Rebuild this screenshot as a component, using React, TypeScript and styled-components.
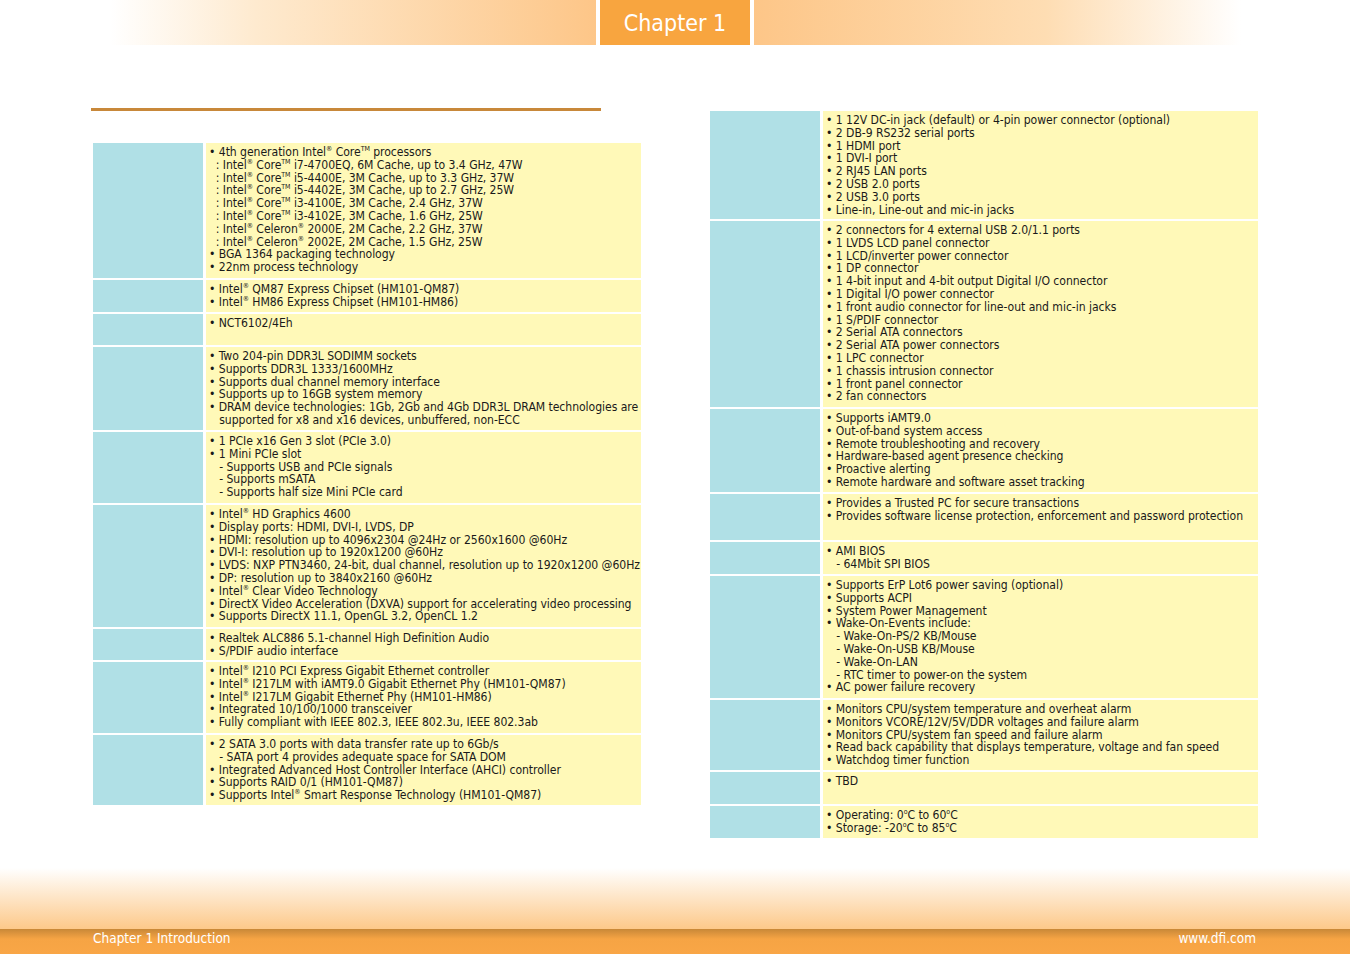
import React from "react";
import styled, { createGlobalStyle } from "styled-components";

const G = createGlobalStyle`
  html,body{margin:0;padding:0;background:#fff;}
  body{font-family:"DejaVu Sans Condensed","DejaVu Sans",sans-serif;}
`;
const Page = styled.div`width:1350px;height:954px;position:relative;overflow:hidden;display:flex;flex-direction:column;`;
const Header = styled.div`display:flex;height:45px;padding-left:110px;gap:4px;`;
const HBarL = styled.div`width:486px;background:linear-gradient(90deg,#fff 0%,#feeacf 30%,#fdc688 100%);`;
const HBarR = styled.div`width:487px;background:linear-gradient(90deg,#fdc688 0%,#feddb3 60%,#fff 100%);`;
const ChapBox = styled.div`width:150px;background:#f8a53f;color:#fff;font-size:23px;display:flex;align-items:center;justify-content:center;font-family:"DejaVu Sans Condensed",sans-serif;`;
const Body = styled.div`display:flex;flex:1;`;
const Col = styled.div<{ $pl: number; $pt: number }>`padding-left:${p => p.$pl}px;padding-top:${p => p.$pt}px;display:flex;flex-direction:column;`;
const Rule = styled.div`width:510px;height:3px;background:#c8883a;margin-bottom:32px;`;
const Table = styled.div`display:flex;flex-direction:column;gap:2px;padding-left:${(p: { $pl?: number }) => p.$pl || 0}px;`;
const Row = styled.div<{ $h: number }>`display:flex;gap:3px;height:${p => p.$h}px;`;
const Label = styled.div`width:110px;background:#b0e0e6;`;
const Content = styled.div`width:435px;background:#fff9b8;padding:3px 0 0 3px;box-sizing:border-box;font-size:12.1px;line-height:12.8px;color:#1a1a1a;white-space:pre;letter-spacing:-0.05px;`;
const Sup = styled.sup`font-size:7px;line-height:0;vertical-align:5px;`;
const Footer = styled.div`height:86px;display:flex;flex-direction:column;`;
const FGrad = styled.div`height:61px;background:linear-gradient(180deg,#fff 0%,#fdc98a 100%);`;
const FBar = styled.div`height:25px;background:linear-gradient(180deg,#c88838 0%,#f6a444 40%,#f9a646 100%);display:flex;justify-content:space-between;align-items:flex-start;padding:1px 94px 0 93px;box-sizing:border-box;color:#fff;font-size:13.5px;`;

const fmt = (s: string) => {
  const parts = s.split(/(®|™|°)/);
  return parts.map((p, i) =>
    p === "®" ? <Sup key={i}>®</Sup> : p === "™" ? <Sup key={i}>TM</Sup> : p === "°" ? <Sup key={i}>o</Sup> : p
  );
};

const left: [number, string[]][] = [
  [135, ["• 4th generation Intel® Core™ processors", "  : Intel® Core™ i7-4700EQ, 6M Cache, up to 3.4 GHz, 47W", "  : Intel® Core™ i5-4400E, 3M Cache, up to 3.3 GHz, 37W", "  : Intel® Core™ i5-4402E, 3M Cache, up to 2.7 GHz, 25W", "  : Intel® Core™ i3-4100E, 3M Cache, 2.4 GHz, 37W", "  : Intel® Core™ i3-4102E, 3M Cache, 1.6 GHz, 25W", "  : Intel® Celeron® 2000E, 2M Cache, 2.2 GHz, 37W", "  : Intel® Celeron® 2002E, 2M Cache, 1.5 GHz, 25W", "• BGA 1364 packaging technology", "• 22nm process technology"]],
  [32, ["• Intel® QM87 Express Chipset (HM101-QM87)", "• Intel® HM86 Express Chipset (HM101-HM86)"]],
  [31, ["• NCT6102/4Eh"]],
  [83, ["• Two 204-pin DDR3L SODIMM sockets", "• Supports DDR3L 1333/1600MHz", "• Supports dual channel memory interface", "• Supports up to 16GB system memory", "• DRAM device technologies: 1Gb, 2Gb and 4Gb DDR3L DRAM technologies are", "   supported for x8 and x16 devices, unbuffered, non-ECC"]],
  [71, ["• 1 PCIe x16 Gen 3 slot (PCIe 3.0)", "• 1 Mini PCIe slot", "   - Supports USB and PCIe signals", "   - Supports mSATA", "   - Supports half size Mini PCIe card"]],
  [122, ["• Intel® HD Graphics 4600", "• Display ports: HDMI, DVI-I, LVDS, DP", "• HDMI: resolution up to 4096x2304 @24Hz or 2560x1600 @60Hz", "• DVI-I: resolution up to 1920x1200 @60Hz", "• LVDS: NXP PTN3460, 24-bit, dual channel, resolution up to 1920x1200 @60Hz", "• DP: resolution up to 3840x2160 @60Hz", "• Intel® Clear Video Technology", "• DirectX Video Acceleration (DXVA) support for accelerating video processing", "• Supports DirectX 11.1, OpenGL 3.2, OpenCL 1.2"]],
  [31, ["• Realtek ALC886 5.1-channel High Definition Audio", "• S/PDIF audio interface"]],
  [71, ["• Intel® I210 PCI Express Gigabit Ethernet controller", "• Intel® I217LM with iAMT9.0 Gigabit Ethernet Phy (HM101-QM87)", "• Intel® I217LM Gigabit Ethernet Phy (HM101-HM86)", "• Integrated 10/100/1000 transceiver", "• Fully compliant with IEEE 802.3, IEEE 802.3u, IEEE 802.3ab"]],
  [70, ["• 2 SATA 3.0 ports with data transfer rate up to 6Gb/s", "   - SATA port 4 provides adequate space for SATA DOM", "• Integrated Advanced Host Controller Interface (AHCI) controller", "• Supports RAID 0/1 (HM101-QM87)", "• Supports Intel® Smart Response Technology (HM101-QM87)"]],
];
const right: [number, string[]][] = [
  [108, ["• 1 12V DC-in jack (default) or 4-pin power connector (optional)", "• 2 DB-9 RS232 serial ports", "• 1 HDMI port", "• 1 DVI-I port", "• 2 RJ45 LAN ports", "• 2 USB 2.0 ports", "• 2 USB 3.0 ports", "• Line-in, Line-out and mic-in jacks"]],
  [186, ["• 2 connectors for 4 external USB 2.0/1.1 ports", "• 1 LVDS LCD panel connector", "• 1 LCD/inverter power connector", "• 1 DP connector", "• 1 4-bit input and 4-bit output Digital I/O connector", "• 1 Digital I/O power connector", "• 1 front audio connector for line-out and mic-in jacks", "• 1 S/PDIF connector", "• 2 Serial ATA connectors", "• 2 Serial ATA power connectors", "• 1 LPC connector", "• 1 chassis intrusion connector", "• 1 front panel connector", "• 2 fan connectors"]],
  [83, ["• Supports iAMT9.0", "• Out-of-band system access", "• Remote troubleshooting and recovery", "• Hardware-based agent presence checking", "• Proactive alerting", "• Remote hardware and software asset tracking"]],
  [46, ["• Provides a Trusted PC for secure transactions", "• Provides software license protection, enforcement and password protection"]],
  [32, ["• AMI BIOS", "   - 64Mbit SPI BIOS"]],
  [122, ["• Supports ErP Lot6 power saving (optional)", "• Supports ACPI", "• System Power Management", "• Wake-On-Events include:", "   - Wake-On-PS/2 KB/Mouse", "   - Wake-On-USB KB/Mouse", "   - Wake-On-LAN", "   - RTC timer to power-on the system", "• AC power failure recovery"]],
  [70, ["• Monitors CPU/system temperature and overheat alarm", "• Monitors VCORE/12V/5V/DDR voltages and failure alarm", "• Monitors CPU/system fan speed and failure alarm", "• Read back capability that displays temperature, voltage and fan speed", "• Watchdog timer function"]],
  [32, ["• TBD"]],
  [32, ["• Operating: 0°C to 60°C", "• Storage: -20°C to 85°C"]],
];

const Tbl = ({ rows, pl }: { rows: [number, string[]][]; pl?: number }) => (
  <Table $pl={pl}>
    {rows.map(([h, lines], i) => (
      <Row key={i} $h={h}>
        <Label />
        <Content>{lines.map((l, j) => <div key={j}>{fmt(l)}</div>)}</Content>
      </Row>
    ))}
  </Table>
);

export default function App() {
  return (
    <Page>
      <G />
      <Header>
        <HBarL />
        <ChapBox>Chapter 1</ChapBox>
        <HBarR />
      </Header>
      <Body>
        <Col $pl={91} $pt={63}>
          <Rule />
          <Tbl rows={left} pl={2} />
        </Col>
        <Col $pl={69} $pt={66}>
          <Tbl rows={right} />
        </Col>
      </Body>
      <Footer>
        <FGrad />
        <FBar><span>Chapter 1 Introduction</span><span>www.dfi.com</span></FBar>
      </Footer>
    </Page>
  );
}
